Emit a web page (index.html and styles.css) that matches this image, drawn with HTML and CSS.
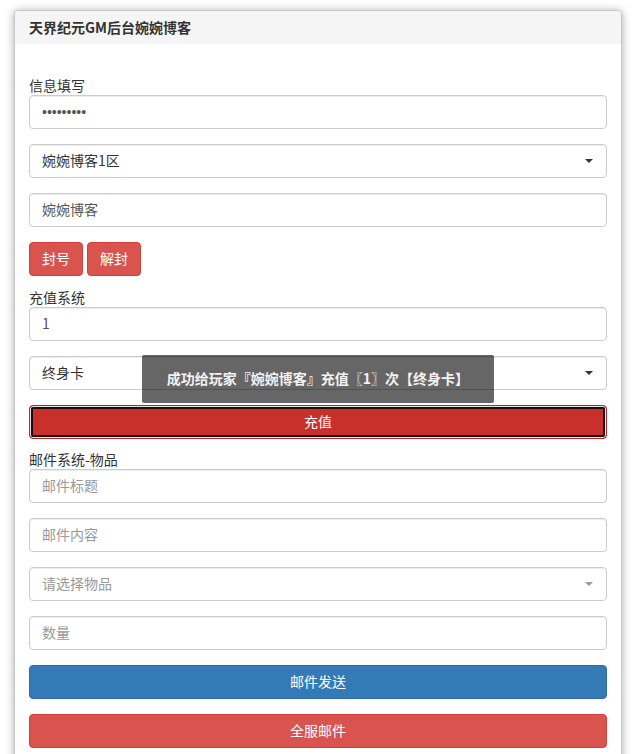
FILE: index.html
```html
<!DOCTYPE html>
<html lang="zh-CN">
<head>
<meta charset="utf-8">
<title>天界纪元GM后台婉婉博客</title>
<link rel="stylesheet" href="styles.css">
</head>
<body>
<div class="panel">
  <div class="panel-heading">天界纪元GM后台婉婉博客</div>
  <div class="panel-body">
    <label class="lbl">信息填写</label>
    <div class="form-group"><input class="form-control pwd" type="password" value="123456789"></div>
    <div class="form-group"><div class="form-control select">婉婉博客1区<span class="caret"></span></div></div>
    <div class="form-group"><input class="form-control" type="text" value="婉婉博客"></div>
    <div class="btn-row">
      <button class="btn btn-danger">封号</button>
      <button class="btn btn-danger">解封</button>
    </div>
    <label class="lbl">充值系统</label>
    <div class="form-group"><input class="form-control" type="text" value="1"></div>
    <div class="form-group"><div class="form-control select">终身卡<span class="caret"></span></div></div>
    <div class="form-group form-group-tight"><button class="btn btn-block btn-danger-active">充值</button></div>
    <label class="lbl lbl-tight">邮件系统-物品</label>
    <div class="form-group"><input class="form-control" type="text" placeholder="邮件标题"></div>
    <div class="form-group"><input class="form-control" type="text" placeholder="邮件内容"></div>
    <div class="form-group"><div class="form-control select placeholder">请选择物品<span class="caret caret-light"></span></div></div>
    <div class="form-group"><input class="form-control" type="text" placeholder="数量"></div>
    <div class="form-group"><button class="btn btn-block btn-primary">邮件发送</button></div>
    <div class="form-group"><button class="btn btn-block btn-danger">全服邮件</button></div>
  </div>
</div>
<div class="toast">成功给玩家『婉婉博客』充值〖1〗次【终身卡】</div>
</body>
</html>
```
FILE: styles.css
```css
html, body {
  margin: 0;
  padding: 0;
  background: #fff;
  overflow: hidden;
}
body {
  font-family: "Noto Sans CJK SC", "Liberation Sans", sans-serif;
  font-size: 14px;
  line-height: 20px;
  color: #333;
  height: 754px;
  position: relative;
}
.panel {
  margin: 10px 15px 0 14px;
  border: 1px solid #c8c8c8;
  border-radius: 4px;
  background: #fff;
  box-shadow: 0 1px 8px rgba(0, 0, 0, 0.35);
}
.panel-heading {
  background: #f5f5f5;
  height: 33px;
  box-sizing: border-box;
  padding: 6px 14px 7px 14px;
  font-weight: bold;
  color: #333;
  border-radius: 3px 3px 0 0;
}
.panel-body {
  padding: 31px 14px 15px 14px;
}
.lbl {
  display: block;
  height: 20px;
  line-height: 20px;
  margin: 0;
}
.lbl-tight {
  height: 19px;
  line-height: 19px;
}
.form-group {
  margin-bottom: 15px;
}
.form-group-tight {
  margin-bottom: 11px;
}
.form-control {
  display: block;
  box-sizing: border-box;
  width: 100%;
  height: 34px;
  padding: 5px 12px 7px 12px;
  font-family: inherit;
  font-size: 14px;
  line-height: 20px;
  color: #555;
  background: #fff;
  border: 1px solid #ccc;
  border-radius: 4px;
  box-shadow: inset 0 1px 1px rgba(0, 0, 0, 0.075);
  margin: 0;
}
.form-control::placeholder {
  color: #999;
}
.pwd {
  font-family: "Liberation Sans", sans-serif;
  font-size: 14px;
  color: #555;
  padding: 6px 12px;
}
.select {
  position: relative;
  color: #333;
}
.select.placeholder {
  color: #999;
}
.caret {
  position: absolute;
  right: 13px;
  top: 14px;
  width: 0;
  height: 0;
  border-left: 4px solid transparent;
  border-right: 4px solid transparent;
  border-top: 4px solid #333;
}
.caret-light {
  border-top-color: #999;
}
.btn-row {
  display: flex;
  gap: 4px;
  margin-bottom: 11px;
}
.btn {
  display: inline-block;
  box-sizing: border-box;
  height: 34px;
  padding: 5px 12px 7px 12px;
  font-family: inherit;
  font-size: 14px;
  line-height: 20px;
  text-align: center;
  border: 1px solid transparent;
  border-radius: 4px;
  color: #fff;
  cursor: pointer;
  margin: 0;
}
.btn-block {
  display: block;
  width: 100%;
}
.btn-danger {
  background: #d9534f;
  border-color: #d43f3a;
}
.btn-danger-active {
  background: #c9302c;
  border-color: #ac2925;
  box-shadow: inset 0 0 0 1px #f3dede, inset 0 0 0 3px #111;
}
.btn-primary {
  background: #337ab7;
  border-color: #2e6da4;
}
.toast {
  position: absolute;
  left: 142px;
  top: 355px;
  width: 352px;
  height: 48px;
  box-sizing: border-box;
  background: rgba(0, 0, 0, 0.6);
  border-radius: 2px;
  color: #f2f2f2;
  font-weight: bold;
  text-align: center;
  padding-top: 13px;
  line-height: 20px;
}
```
